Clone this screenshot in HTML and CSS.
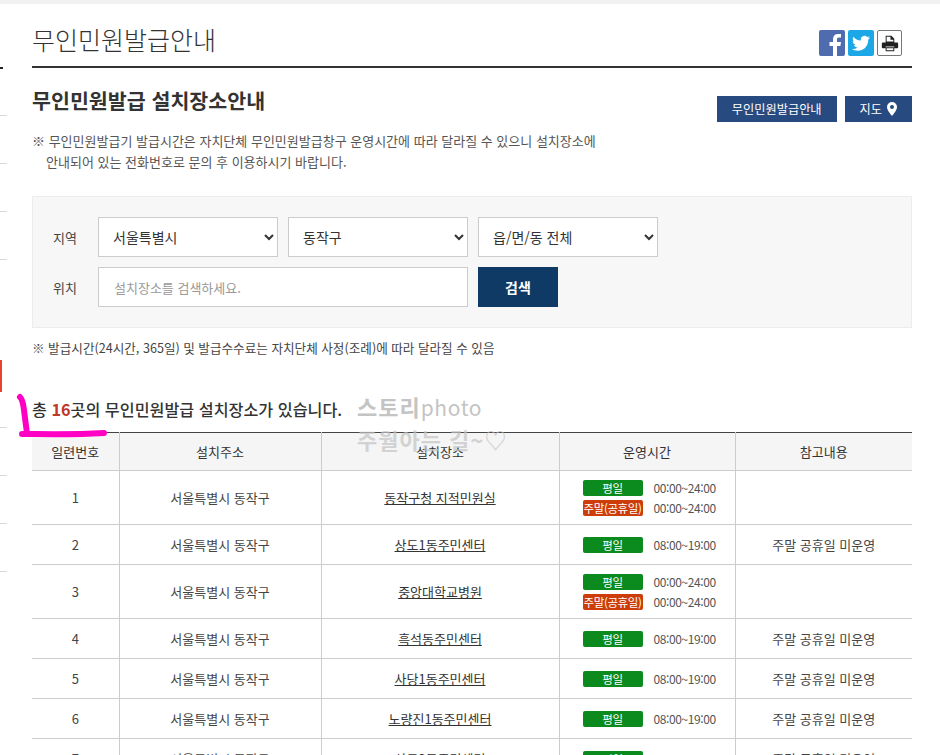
FILE: index.html
```html
<!DOCTYPE html>
<html lang="ko">

<head>
  <meta charset="UTF-8">
  <title>무인민원발급안내</title>
  <link rel="stylesheet" href="styles.css">
</head>

<body>
  <div class="topbar"></div>
  <div class="page">
    <aside class="sidemenu">
      <div class="tick dark"></div>
      <div class="tick"></div>
      <div class="tick"></div>
      <div class="tick"></div>
      <div class="tick"></div>
      <div class="tick-active"></div>
      <div class="tick first-sub"></div>
      <div class="tick"></div>
      <div class="tick"></div>
      <div class="tick"></div>
    </aside>

    <main class="content">
      <div class="page-head">
        <h1>무인민원발급안내</h1>
        <div class="share">
          <a class="share-btn fb">
            <svg viewBox="0 0 26 26" width="26" height="26"><path fill="#fff" d="M18 26V16h3.400l.6-4h-4V9.600c0-1.200.4-2 2.100-2H22V4.100C21.600 4 20.400 4 19.100 4 16 4 14 5.800 14 9.100V12h-3.500v4H14v10z"/></svg>
          </a>
          <a class="share-btn tw">
            <svg viewBox="0 0 26 26" width="26" height="26"><path fill="#fff" d="M22 7.600c-.7.300-1.400.5-2.100.6.800-.5 1.300-1.200 1.600-2-.7.400-1.500.7-2.300.9a3.700 3.700 0 0 0-6.300 3.400C9.800 10.300 7.100 8.900 5.300 6.700c-1 1.700-.5 3.800 1.100 4.900-.6 0-1.200-.2-1.700-.5 0 1.800 1.300 3.300 3 3.700-.5.100-1.100.2-1.700.1.500 1.500 1.900 2.500 3.500 2.600A7.500 7.500 0 0 1 4 19c1.700 1.100 3.600 1.700 5.700 1.700 6.900 0 10.800-5.800 10.500-11 .7-.5 1.300-1.200 1.800-2.100z"/></svg>
          </a>
          <a class="share-btn print">
            <svg viewBox="0 0 24 24" width="23" height="23"><path fill="#222" d="M8 4h6l3 3v4H8zm1 1v5h7V8h-3V5zM5 11h15a1 1 0 0 1 1 1v4a1 1 0 0 1-1 1h-3v-2H8v2H5a1 1 0 0 1-1-1v-4a1 1 0 0 1 1-1zm3 5h9v4H8zm1 1v2h7v-2z"/></svg>
          </a>
        </div>
      </div>

      <div class="sub-head">
        <h2>무인민원발급 설치장소안내</h2>
        <div class="sub-links">
          <a class="navy-btn">무인민원발급안내</a>
          <a class="navy-btn">지도
            <svg viewBox="0 0 10 14" width="10" height="14"><path fill="#fff" fill-rule="evenodd" d="M5 0a5 5 0 0 1 5 5c0 3-3 6.500-5 9-2-2.500-5-6-5-9a5 5 0 0 1 5-5zm0 3a2 2 0 1 0 0 4 2 2 0 0 0 0-4z"/></svg>
          </a>
        </div>
      </div>

      <p class="notice">※ 무인민원발급기 발급시간은 자치단체 무인민원발급창구 운영시간에 따라 달라질 수 있으니 설치장소에<br><span class="indent">안내되어 있는 전화번호로 문의 후 이용하시기 바랍니다.</span></p>

      <form class="search-box">
        <div class="search-row">
          <label>지역</label>
          <select class="field">
            <option>서울특별시</option>
          </select>
          <select class="field">
            <option>동작구</option>
          </select>
          <select class="field">
            <option>읍/면/동 전체</option>
          </select>
        </div>
        <div class="search-row">
          <label>위치</label>
          <input class="field keyword" type="text" placeholder="설치장소를 검색하세요.">
          <button class="search-btn" type="button">검색</button>
        </div>
      </form>

      <p class="notice small">※ 발급시간(24시간, 365일) 및 발급수수료는 자치단체 사정(조례)에 따라 달라질 수 있음</p>

      <p class="total">총 <strong>16</strong>곳의 무인민원발급 설치장소가 있습니다.</p>

      <table class="place-table">
        <colgroup>
          <col class="c-no">
          <col class="c-addr">
          <col class="c-place">
          <col class="c-time">
          <col class="c-memo">
        </colgroup>
        <thead>
          <tr>
            <th>일련번호</th>
            <th>설치주소</th>
            <th>설치장소</th>
            <th>운영시간</th>
            <th>참고내용</th>
          </tr>
        </thead>
        <tbody>
          <tr class="two-line">
            <td>1</td>
            <td>서울특별시 동작구</td>
            <td><a>동작구청 지적민원실</a></td>
            <td>
              <div class="hours"><span class="badge green">평일</span><span>00:00~24:00</span></div>
              <div class="hours"><span class="badge red">주말(공휴일)</span><span>00:00~24:00</span></div>
            </td>
            <td></td>
          </tr>
          <tr>
            <td>2</td>
            <td>서울특별시 동작구</td>
            <td><a>상도1동주민센터</a></td>
            <td>
              <div class="hours"><span class="badge green">평일</span><span>08:00~19:00</span></div>
            </td>
            <td>주말 공휴일 미운영</td>
          </tr>
          <tr class="two-line">
            <td>3</td>
            <td>서울특별시 동작구</td>
            <td><a>중앙대학교병원</a></td>
            <td>
              <div class="hours"><span class="badge green">평일</span><span>00:00~24:00</span></div>
              <div class="hours"><span class="badge red">주말(공휴일)</span><span>00:00~24:00</span></div>
            </td>
            <td></td>
          </tr>
          <tr>
            <td>4</td>
            <td>서울특별시 동작구</td>
            <td><a>흑석동주민센터</a></td>
            <td>
              <div class="hours"><span class="badge green">평일</span><span>08:00~19:00</span></div>
            </td>
            <td>주말 공휴일 미운영</td>
          </tr>
          <tr>
            <td>5</td>
            <td>서울특별시 동작구</td>
            <td><a>사당1동주민센터</a></td>
            <td>
              <div class="hours"><span class="badge green">평일</span><span>08:00~19:00</span></div>
            </td>
            <td>주말 공휴일 미운영</td>
          </tr>
          <tr>
            <td>6</td>
            <td>서울특별시 동작구</td>
            <td><a>노량진1동주민센터</a></td>
            <td>
              <div class="hours"><span class="badge green">평일</span><span>08:00~19:00</span></div>
            </td>
            <td>주말 공휴일 미운영</td>
          </tr>
          <tr>
            <td>7</td>
            <td>서울특별시 동작구</td>
            <td><a>상도2동주민센터</a></td>
            <td>
              <div class="hours"><span class="badge green">평일</span><span>08:00~19:00</span></div>
            </td>
            <td>주말 공휴일 미운영</td>
          </tr>
        </tbody>
      </table>
    </main>
  </div>

  <!-- 캡처 위에 그려진 표시와 워터마크 -->
  <svg class="marker" viewBox="0 0 120 60" width="120" height="60">
    <path d="M20 7C23 10 23 14 24 20C25 28 26 36 27 43M22 44C40 44 70 45 104 43" fill="none" stroke="#ff00c4" stroke-width="6" stroke-linecap="round" stroke-linejoin="round"/>
  </svg>
  <div class="watermark">
    <div class="wm-line"><b>스토리</b>photo</div>
    <div class="wm-line second"><b>주월아는 길~♡</b></div>
  </div>
</body>

</html>
```

FILE: styles.css
```css
* {
  box-sizing: border-box;
}
html, body {
  height: 755px;
  overflow: hidden;
}
body {
  margin: 0;
  background: #fff;
  color: #333;
  font-family: "Noto Sans CJK KR", "Noto Sans", sans-serif;
  font-size: 13px;
}
.topbar {
  height: 4px;
  background: #f1f1f1;
}
.page {
  display: flex;
}

/* 왼쪽 메뉴 잘린 부분 */
.sidemenu {
  width: 32px;
  flex: none;
  padding-top: 63px;
}
.tick {
  width: 7px;
  height: 48px;
  border-top: 1px solid #d8d8d8;
}
.tick.dark {
  width: 3px;
  border-top: 2px solid #222;
}
.tick-active {
  width: 2px;
  height: 32px;
  margin-top: 53px;
  background: #e8432e;
}
.first-sub {
  margin-top: 35px;
}

.content {
  width: 880px;
  flex: none;
}
.page-head {
  height: 64px;
  border-bottom: 2px solid #333;
  display: flex;
  justify-content: space-between;
  align-items: flex-start;
  padding-top: 26px;
  padding-right: 10px;
}
.page-head h1 {
  margin: -9px 0 0;
  font-size: 25px;
  font-weight: 300;
  line-height: 36px;
  color: #333;
}
.share {
  display: flex;
  gap: 3px;
}
.share-btn {
  display: flex;
  align-items: center;
  justify-content: center;
  width: 26px;
  height: 26px;
  border-radius: 2px;
}
.fb {
  background: #4e6cae;
}
.tw {
  background: #1ca8e6;
}
.print {
  width: 25px;
  border: 1px solid #777;
  background: #fff;
}

.sub-head {
  display: flex;
  justify-content: space-between;
  align-items: flex-start;
  margin-top: 28px;
}
.sub-head h2 {
  margin: -10px 0 0;
  font-size: 20.6px;
  font-weight: 700;
  line-height: 28px;
  color: #333;
}
.sub-links {
  display: flex;
  gap: 8px;
}
.navy-btn {
  display: flex;
  align-items: center;
  gap: 5px;
  height: 26px;
  padding: 0 15px;
  background: #274a80;
  color: #fff;
  font-size: 12.2px;
}

.notice {
  margin: 0;
  font-size: 13px;
  line-height: 21px;
  color: #555;
}
.indent {
  padding-left: 14px;
}
.sub-head + .notice {
  margin-top: 8px;
}

.search-box {
  margin-top: 24px;
  height: 132px;
  padding: 20px;
  background: #f7f7f7;
  border: 1px solid #ececec;
  display: flex;
  flex-direction: column;
  gap: 10px;
}
.search-row {
  display: flex;
  gap: 10px;
  align-items: center;
}
.search-row label {
  width: 35px;
  font-size: 13px;
  color: #444;
}
.field {
  width: 180px;
  height: 40px;
  background: #fff;
  border: 1px solid #ccc;
  padding: 0 10px;
  font-family: inherit;
  font-size: 14px;
  color: #333;
  border-radius: 0;
}
.keyword {
  width: 370px;
  padding: 0 15px;
  font-size: 13px;
}
.keyword::placeholder {
  color: #999;
}
.search-btn {
  width: 80px;
  height: 40px;
  border: 0;
  background: #0f3a66;
  color: #fff;
  font-family: inherit;
  font-size: 14px;
  font-weight: 700;
}
.notice.small {
  margin-top: 9px;
  font-size: 12.6px;
  color: #444;
}

.total {
  margin: 39px 0 0;
  font-size: 16.2px;
  font-weight: 500;
  line-height: 24px;
  color: #333;
}
.total strong {
  color: #c0392b;
  font-weight: 700;
}

.place-table {
  width: 880px;
  margin-top: 11px;
  table-layout: fixed;
  border-collapse: collapse;
  border-top: 1px solid #444;
  text-align: center;
}
.c-no {
  width: 87px;
}
.c-addr {
  width: 202px;
}
.c-place {
  width: 238px;
}
.c-time {
  width: 176px;
}
.c-memo {
  width: 177px;
}
.place-table th {
  height: 38px;
  padding: 0;
  background: #f5f5f5;
  font-size: 13px;
  font-weight: 400;
  color: #333;
  border-bottom: 1px solid #ccc;
  border-left: 1px solid #ccc;
}
.place-table td {
  height: 40px;
  padding: 0;
  font-size: 13px;
  color: #444;
  border-bottom: 1px solid #ccc;
  border-left: 1px solid #ccc;
}
.place-table .two-line td {
  height: 54px;
}
.place-table th:first-child,
.place-table td:first-child {
  border-left: 0;
}
.place-table a {
  color: #333;
  text-decoration: underline;
}
.hours {
  display: flex;
  align-items: center;
  gap: 11px;
  padding-left: 23px;
  font-size: 12px;
  line-height: 16px;
  letter-spacing: -0.4px;
  color: #555;
}
.hours + .hours {
  margin-top: 4px;
}
.badge {
  width: 60px;
  height: 16px;
  border-radius: 2px;
  color: #fff;
  font-size: 11.5px;
  line-height: 16px;
  text-align: center;
  white-space: nowrap;
}
.green {
  background: #0b8a1e;
}
.red {
  background: #cc3d0a;
}

.marker {
  position: absolute;
  left: 0;
  top: 390px;
}
.watermark {
  position: absolute;
  left: 357px;
  top: 392px;
  color: #c4c4c4;
  font-size: 21px;
  line-height: 28px;
  letter-spacing: 0.6px;
}
.wm-line b {
  font-weight: 700;
  font-size: 22px;
  letter-spacing: 1px;
}
.wm-line.second {
  margin-top: 4px;
  opacity: 0.7;
}
```
